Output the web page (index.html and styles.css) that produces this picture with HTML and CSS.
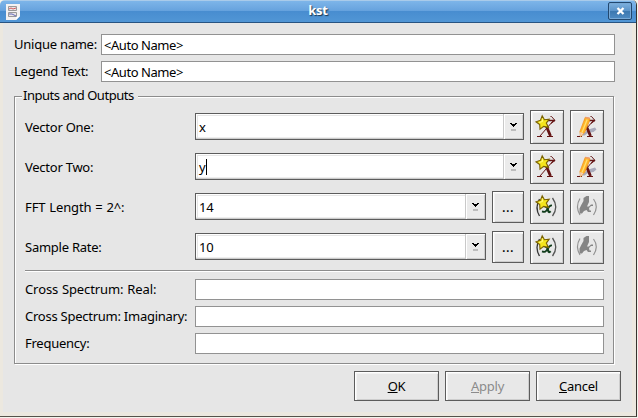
FILE: index.html
```html
<!DOCTYPE html>
<html lang="en">
<head>
<meta charset="utf-8">
<title>kst</title>
<link rel="stylesheet" href="styles.css">
</head>
<body>
<svg class="defs" aria-hidden="true">
  <defs>
    <g id="star"><path d="M12.200 5.800l2.200 3.900 4.800-.5-2.900 3.900 2.200 4.300-4.800-1-3.700 2.700-.3-4.600-3.700-2.700 4.500-1.600z" fill="#f5e51c" stroke="#7a6200" stroke-width="1.100"/><path d="M12.300 8.500l.3 3-3.500 1" fill="none" stroke="#fffb83"/></g>
    <g id="vec" fill="none" stroke="#651515">
      <path d="M14 10.500h11" stroke-width="1.300"/><path d="M20.500 6.500h1l3.500 4-4 3M23 11l-13 15" stroke-width="1"/><path d="M7 26.500h5M17 26.500h6" stroke-width="1.200"/>
      <path d="M15 13l5.500 13" stroke-width="2.800"/>
    </g>
    <symbol id="vector-new" viewBox="0 0 34 34"><use href="#vec"/><use href="#star"/></symbol>
    <symbol id="vector-edit" viewBox="0 0 34 34">
      <path d="M12 25.500l2-3 6-3.500 5-1.500 1.500 2-3 2.500-5 .8-4 2.700z" fill="#a9abbc"/><use href="#vec"/>
      <path d="M15.200 7.300l4.600 1-.3 2.700-4.800 11.500-4.200 4.300-.6-5.300z" fill="#ffb428" stroke="#f0901c" stroke-width=".7"/>
      <path d="M17.200 9.500l-5.200 13" stroke="#ffe070" stroke-width="1.300"/>
      <path d="M10.200 22l3.300 1.200-3.200 3.800z" fill="#f4cdb0"/><path d="M15.500 7.500l4 .8" stroke="#ee9b73" stroke-width="1.500"/>
    </symbol>
    <symbol id="scalar-new" viewBox="0 0 34 34">
      <g fill="none"><path d="M9.500 9q-5 8.500 0 17" stroke="#353535" stroke-width="1.300"/><path d="M22.500 8q6.500 9 0 18" stroke="#555" stroke-width="1.300"/>
      <path d="M14.500 17q2.500-1.500 3 1.500l.7 2.500q.6 2 2.500.3" stroke="#103c1b" stroke-width="2.200"/><path d="M22 15.500q-2.500-.3-4 3l-2 2.500q-1 1.500-4 .4" stroke="#103c1b" stroke-width="1.700"/></g>
      <use href="#star"/>
    </symbol>
    <symbol id="scalar-edit" viewBox="0 0 34 34">
      <g fill="none" stroke="#929292" stroke-width="1.200"><path d="M10 8.500q-5 8 0 16.500M23.500 9q5.500 7.500 0 16"/></g>
      <path d="M15 7l1.500-1h2.500v6l-2 4.500 2 0 2-2h2v1.500h-2l-2 2 .5 2.500h1.500v1.500h-3l-1.500-2-2.500 1-2 2.500h-2.500v-5l2-4 2-3.500v-3z" fill="#858585"/>
    </symbol>
    <symbol id="drop" viewBox="0 0 7 9"><path d="M0 1h2v1h3V1h2v1H6v1H5v1H4v1H3V4H2V3H1V2H0z" fill="#000"/><path d="M1 2h5v1H5v1H2V3H1z" fill="#000"/><path d="M1 7h5v2H1z" fill="#bdbdbd"/></symbol>
  </defs>
</svg>
<div class="window">
  <header class="titlebar">
    <svg class="app-icon" viewBox="0 0 14 16"><path d="M0 0h14v12l-4 4H0z" fill="#f4f2f2"/><path d="M14 12l-4 4v-4z" fill="#fff"/><path d="M2.500 2.500h8v4h-8zM2.500 8.500h8v4h-8z" fill="#ece6e8" stroke="#999"/><path d="M3 5l2-1 2 1 3-1" fill="none" stroke="#d25c5c"/><path d="M3 10h3l2 1 2 1" fill="none" stroke="#626bb8"/></svg>
    <span class="title">kst</span>
    <button class="close" aria-label="Close"><svg viewBox="0 0 9 8"><path d="M1.500 1l6 6m0-6l-6 6" stroke="#fff" stroke-width="2.300"/></svg></button>
  </header>
  <main class="content">
    <div class="row top"><label>Unique name:</label><div class="field">&lt;Auto Name&gt;</div></div>
    <div class="row top"><label>Legend Text:</label><div class="field">&lt;Auto Name&gt;</div></div>
    <section class="group">
      <h2 class="legend"><span>Inputs and Outputs</span></h2>
      <div class="row tall"><label>Vector One:</label><div class="combo"><span class="value">x</span><span class="arrow"><svg><use href="#drop"/></svg></span></div><button class="tool"><svg><use href="#vector-new"/></svg></button><button class="tool"><svg><use href="#vector-edit"/></svg></button></div>
      <div class="row tall"><label>Vector Two:</label><div class="combo"><span class="value caret">y</span><span class="arrow"><svg><use href="#drop"/></svg></span></div><button class="tool"><svg><use href="#vector-new"/></svg></button><button class="tool"><svg><use href="#vector-edit"/></svg></button></div>
      <div class="row tall"><label class="wide">FFT Length = 2^:</label><div class="combo"><span class="value">14</span><span class="arrow"><svg><use href="#drop"/></svg></span></div><button class="more">...</button><button class="tool"><svg><use href="#scalar-new"/></svg></button><button class="tool"><svg><use href="#scalar-edit"/></svg></button></div>
      <div class="row tall"><label>Sample Rate:</label><div class="combo"><span class="value">10</span><span class="arrow"><svg><use href="#drop"/></svg></span></div><button class="more">...</button><button class="tool"><svg><use href="#scalar-new"/></svg></button><button class="tool"><svg><use href="#scalar-edit"/></svg></button></div>
      <hr>
      <div class="row out"><label class="wide">Cross Spectrum: Real:</label><div class="field"></div></div>
      <div class="row out"><label>Cross Spectrum: Imaginary:</label><div class="field"></div></div>
      <div class="row out"><label>Frequency:</label><div class="field"></div></div>
    </section>
    <footer class="actions"><button><u>O</u>K</button><button class="disabled"><u>A</u>pply</button><button><u>C</u>ancel</button></footer>
  </main>
</div>
</body>
</html>
```
FILE: styles.css
```css
* { box-sizing: border-box; }
body { margin: 0; background: #f3f4ec; font: 13px/17px "Noto Sans", "Open Sans", sans-serif; letter-spacing: -.25px; color: #000; overflow: hidden; }
.defs { position: absolute; width: 0; height: 0; }
.window { width: 637px; height: 417px; background: #ece8df; border-right: 1px solid #38342e; border-bottom: 1px solid #55524a; border-radius: 5px 5px 0 0; overflow: hidden; }
.titlebar { height: 23px; display: flex; align-items: center; padding: 0 4px 0 6px; border-top: 1px solid #a9cbea; border-bottom: 1px solid #285482; background: linear-gradient(#7db5e9, #67a3de 45%, #488dd0 50%, #5196d5); }
.app-icon { width: 14px; height: 16px; margin-top: 1px; }
.title { flex: 1; text-align: center; padding-left: 8px; margin-top: -2px; color: #fff; font-weight: 700; text-shadow: 1px 1px 1px #193650; }
.close { width: 24px; height: 18px; margin-top: -1px; padding: 0; border: 1px solid #22486f; border-radius: 2px; background: linear-gradient(#7eb1df, #5c94c9 48%, #3c78b0 52%, #4e8bc3); display: flex; align-items: center; justify-content: center; box-shadow: inset 0 0 0 1px #77a9d7; }
.close svg { width: 9px; height: 8px; }
.content { width: 629px; height: 389px; margin-left: 3px; padding: 11px 11px 0; background: #e6e6e6; }
.row { display: flex; align-items: center; }
.row label { flex: none; white-space: nowrap; }
.row .wide { letter-spacing: -.1px; word-spacing: .5px; }
.top { height: 21px; margin-bottom: 6px; width: 601px; }
.top label { width: 87px; }
.field { flex: 1; height: 21px; background: #fff; border: 1px solid #929292; padding: 2px 0 0 2px; line-height: 17px; letter-spacing: -.45px; }
.group { width: 600px; height: 268px; margin-top: 8px; position: relative; border: 1px solid #8c8c8c; box-shadow: inset 1px 1px #fff, 1px 1px #fff; padding: 13px 9px 0 10px; }
.top + .group { margin-top: 14px; }
.legend { position: absolute; left: 7px; top: -10px; height: 18px; margin: 0; padding: 0 3px 0 1px; background: #e6e6e6; font: inherit; letter-spacing: -.48px; width: 116px; white-space: nowrap; }
.tall { height: 34px; margin-bottom: 6px; gap: 6px; }
.tall label { width: 164px; }
.combo { flex: 1; height: 27px; margin-top: -1px; display: flex; border: 1px solid #5c5c5c; background: #fff; box-shadow: inset 0 -1px #ccc, inset 0 -2px #eee; }
.value { flex: 1; margin: 1px 0 1px 1px; border-top: 1px solid #e6e6e6; border-left: 1px solid #e6e6e6; padding: 3px 0 0 1px; white-space: nowrap; }
.caret::after { content: ""; display: inline-block; width: 1px; height: 16px; margin-left: 1px; background: #000; vertical-align: -3px; }
.arrow { width: 20px; background: #ebebeb; border-left: 1px solid #c9c9c9; box-shadow: inset 1px 1px #fff, inset -1px -1px #cecece; display: flex; justify-content: center; padding-top: 8px; }
.arrow svg { width: 7px; height: 9px; }
button { font: inherit; letter-spacing: inherit; }
.tool, .more, .actions button { border: 1px solid #5c5c5c; background: #e8e8e8; box-shadow: inset 1px 1px #fff, inset 2px 2px #f3f3f3, inset -1px -1px #cdcdcd; padding: 0; }
.tool { width: 34px; height: 34px; flex: none; }
.tool svg { display: block; width: 34px; height: 34px; margin: -1px; }
.more { width: 32px; height: 32px; flex: none; letter-spacing: .4px; font-weight: 500; }
hr { border: 0; height: 2px; margin: 0 0 7px; background: linear-gradient(#8c8c8c 50%, #fff 50%); }
.out { height: 21px; margin-bottom: 6px; }
.out label { width: 170px; }
.actions { display: flex; gap: 6px; justify-content: flex-end; margin-top: 7px; width: 607px; }
.actions button { width: 85px; height: 30px; }
.actions .disabled { color: #8b8b8b; }
u { text-underline-offset: 1px; }
```
